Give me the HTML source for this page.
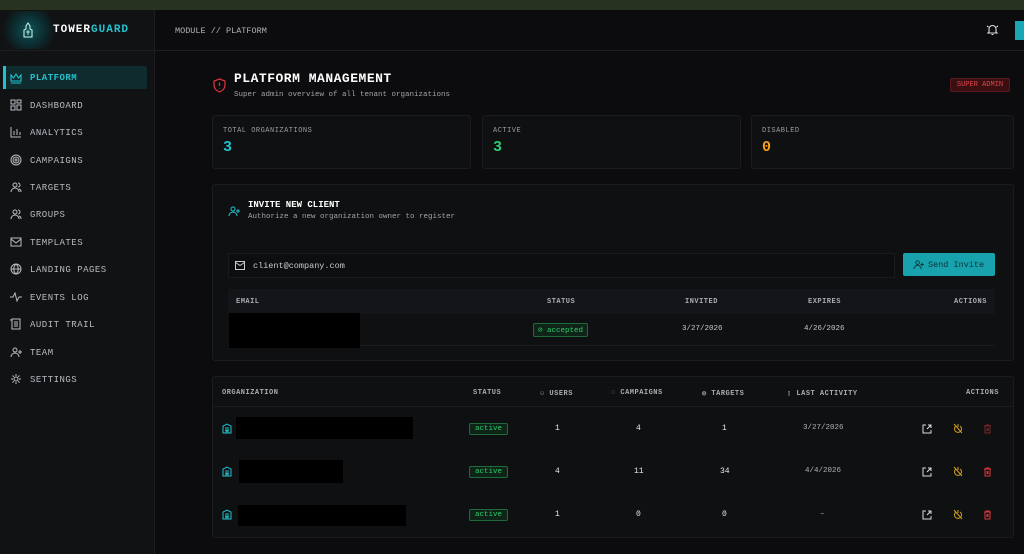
<!DOCTYPE html>
<html><head><meta charset="utf-8"><style>
*{margin:0;padding:0;box-sizing:border-box}
body{width:1024px;height:554px;overflow:hidden;background:#0c0c0e;font-family:"Liberation Mono","DejaVu Sans Mono",monospace;color:#d8d8d8;position:relative}
.a{position:absolute}
.nav{position:absolute;left:30px;font-size:9px;letter-spacing:.5px;color:#b8bcc2}
.ni{position:absolute;left:10px;width:12px;height:12px}
.card{position:absolute;background:#0f1012;border:1px solid #1b1c1f;border-radius:3px}
.lbl{position:absolute;font-size:7px;letter-spacing:.5px;color:#9a9ea4}
.th{position:absolute;font-size:7px;font-weight:bold;color:#a8acb2;letter-spacing:.5px}
.td{position:absolute;font-size:8px;color:#e8e8e8}
.badge{position:absolute;font-size:7.5px;color:#2ecc71;border:1px solid #1f6b3c;background:#0d2416;border-radius:2px;padding:1px 4px}
.blk{position:absolute;background:#000}
svg{display:block}
</style></head><body>
<div class="a" style="left:0;top:0;width:1024px;height:10px;background:#27331f"></div>
<div class="a" style="left:0;top:10px;width:155px;height:544px;background:#111214;border-right:1px solid #1d1e21"></div>
<div class="a" style="left:0;top:50px;width:1024px;height:1px;background:#1d1e21"></div>
<div class="a" style="left:2px;top:11px;width:54px;height:38px;background:radial-gradient(circle,#105357 0%,#0b2e31 45%,transparent 80%)"></div>
<svg class="a" style="left:22px;top:22px" width="12" height="18" viewBox="0 0 12 18"><path d="M6 1 L8 4 L8 7 L10 8 L10 15 L2 15 L2 8 L4 7 L4 4 Z" fill="none" stroke="#cfe" stroke-width="1"/><path d="M4 10h4M6 8v5" stroke="#cfe" stroke-width=".8"/></svg>
<div class="a" style="left:53px;top:24px;font-size:11px;font-weight:bold;letter-spacing:1px;color:#fff">TOWER<span style="color:#22c3cf">GUARD</span></div>
<div class="a" style="left:175px;top:26px;font-size:8.5px;color:#b0b4ba">MODULE // PLATFORM</div>
<svg class="a" style="left:986px;top:23px" width="13" height="13" viewBox="0 0 13 13" fill="none" stroke="#ddd" stroke-width="1.1"><path d="M3 9V6a3.5 3.5 0 017 0v3l1 1H2z M5.5 11.5h2 M1 3l1.5 1 M12 3l-1.5 1"/></svg>
<div class="a" style="left:1015px;top:21px;width:12px;height:19px;background:#19a7b4"></div>

<div class="a" style="left:3px;top:66px;width:144px;height:23px;background:#0f2b2e;border-radius:2px"></div>
<div class="a" style="left:3px;top:66px;width:3px;height:23px;background:#22c3cf"></div>
<svg class="ni" style="top:72px" viewBox="0 0 12 12" fill="none" stroke="#22c3cf" stroke-width="1.1"><path d="M1 3l2.5 3L6 2l2.5 4L11 3v6H1z M1 11h10"/></svg>
<div class="nav" style="top:73px;color:#22c3cf;font-weight:bold">PLATFORM</div>
<div class="nav" style="top:101px">DASHBOARD</div>
<div class="nav" style="top:128px">ANALYTICS</div>
<div class="nav" style="top:156px">CAMPAIGNS</div>
<div class="nav" style="top:183px">TARGETS</div>
<div class="nav" style="top:210px">GROUPS</div>
<div class="nav" style="top:238px">TEMPLATES</div>
<div class="nav" style="top:265px">LANDING PAGES</div>
<div class="nav" style="top:293px">EVENTS LOG</div>
<div class="nav" style="top:320px">AUDIT TRAIL</div>
<div class="nav" style="top:348px">TEAM</div>
<div class="nav" style="top:375px">SETTINGS</div>
<svg class="ni" style="top:99px" viewBox="0 0 12 12" fill="none" stroke="#b8bcc2"><rect x="1" y="1" width="4" height="4"/><rect x="7" y="1" width="4" height="3"/><rect x="1" y="7" width="4" height="4"/><rect x="7" y="6" width="4" height="5"/></svg>
<svg class="ni" style="top:126px" viewBox="0 0 12 12" fill="none" stroke="#b8bcc2"><path d="M1 1v10h10M4 9V5M7 9V3M10 9V6"/></svg>
<svg class="ni" style="top:154px" viewBox="0 0 12 12" fill="none" stroke="#b8bcc2"><circle cx="6" cy="6" r="5"/><circle cx="6" cy="6" r="3"/><circle cx="6" cy="6" r="1"/></svg>
<svg class="ni" style="top:181px" viewBox="0 0 12 12" fill="none" stroke="#b8bcc2"><circle cx="5" cy="4" r="2"/><path d="M1 11a4 4 0 018 0M8 2a2 2 0 010 4M11 11a3 3 0 00-2-3"/></svg>
<svg class="ni" style="top:208px" viewBox="0 0 12 12" fill="none" stroke="#b8bcc2"><circle cx="5" cy="4" r="2"/><path d="M1 11a4 4 0 018 0M8 2a2 2 0 010 4M11 11a3 3 0 00-2-3"/></svg>
<svg class="ni" style="top:236px" viewBox="0 0 12 12" fill="none" stroke="#b8bcc2"><rect x="1" y="2" width="10" height="8"/><path d="M1 3l5 4 5-4"/></svg>
<svg class="ni" style="top:263px" viewBox="0 0 12 12" fill="none" stroke="#b8bcc2"><circle cx="6" cy="6" r="5"/><path d="M1 6h10M6 1c-3 3-3 7 0 10M6 1c3 3 3 7 0 10"/></svg>
<svg class="ni" style="top:291px" viewBox="0 0 12 12" fill="none" stroke="#b8bcc2"><path d="M0 6h3l2-4 2 8 2-4h3"/></svg>
<svg class="ni" style="top:318px" viewBox="0 0 12 12" fill="none" stroke="#b8bcc2"><path d="M2 1h8v10H2zM4 4h4M4 6h4M4 8h4M0 2h2"/></svg>
<svg class="ni" style="top:346px" viewBox="0 0 12 12" fill="none" stroke="#b8bcc2"><circle cx="5" cy="4" r="2"/><path d="M1 11a4 4 0 018 0M10 4v4M8 6h4"/></svg>
<svg class="ni" style="top:373px" viewBox="0 0 12 12" fill="none" stroke="#b8bcc2"><circle cx="6" cy="6" r="2"/><path d="M6 1v2M6 9v2M1 6h2M9 6h2M2.5 2.5l1.4 1.4M8.1 8.1l1.4 1.4M2.5 9.5l1.4-1.4M8.1 3.9l1.4-1.4"/></svg>

<svg class="a" style="left:213px;top:78px" width="13" height="15" viewBox="0 0 13 15" fill="none" stroke="#e0363c" stroke-width="1.2"><path d="M6.5 1L12 3v4c0 4-3 6-5.5 7C4 13 1 11 1 7V3z M6.5 4.5v3.5 M6.5 10v.5"/></svg>
<div class="a" style="left:234px;top:71px;font-size:13px;font-weight:bold;color:#fff;letter-spacing:.5px">PLATFORM MANAGEMENT</div>
<div class="a" style="left:234px;top:91px;font-size:7.5px;color:#a0a4aa">Super admin overview of all tenant organizations</div>
<div class="a" style="left:950px;top:78px;width:60px;height:14px;background:#3a0f12;border:1px solid #5a1a1e;border-radius:2px;font-size:7px;color:#e0474d;text-align:center;line-height:12px">SUPER ADMIN</div>

<div class="card" style="left:212px;top:115px;width:259px;height:54px"></div>
<div class="card" style="left:482px;top:115px;width:259px;height:54px"></div>
<div class="card" style="left:751px;top:115px;width:263px;height:54px"></div>
<div class="lbl" style="left:223px;top:127px">TOTAL ORGANIZATIONS</div>
<div class="lbl" style="left:493px;top:127px">ACTIVE</div>
<div class="lbl" style="left:762px;top:127px">DISABLED</div>
<div class="a" style="left:223px;top:139px;font-size:15px;font-weight:bold;color:#22c3cf">3</div>
<div class="a" style="left:493px;top:139px;font-size:15px;font-weight:bold;color:#2ecc71">3</div>
<div class="a" style="left:762px;top:139px;font-size:15px;font-weight:bold;color:#f0a020">0</div>

<div class="card" style="left:212px;top:184px;width:802px;height:177px"></div>
<svg class="a" style="left:228px;top:205px" width="12" height="12" viewBox="0 0 12 12" fill="none" stroke="#22c3cf"><circle cx="5" cy="4" r="2"/><path d="M1 11a4 4 0 018 0M10 4v4M8 6h4"/></svg>
<div class="a" style="left:248px;top:200px;font-size:9px;font-weight:bold;color:#fff">INVITE NEW CLIENT</div>
<div class="a" style="left:248px;top:213px;font-size:7.5px;color:#a0a4aa">Authorize a new organization owner to register</div>
<div class="a" style="left:228px;top:253px;width:667px;height:25px;background:#0d0e10;border:1px solid #1a1b1e"></div>
<svg class="a" style="left:235px;top:261px" width="10" height="9" viewBox="0 0 10 9" fill="none" stroke="#ccc"><rect x=".5" y=".5" width="9" height="8"/><path d="M.5 1.5l4.5 3 4.5-3"/></svg>
<div class="a" style="left:253px;top:261px;font-size:8.5px;color:#c8ccd2">client@company.com</div>
<div class="a" style="left:903px;top:253px;width:92px;height:23px;background:#17a2ad;border-radius:2px"></div>
<svg class="a" style="left:913px;top:259px" width="11" height="11" viewBox="0 0 12 12" fill="none" stroke="#0c3a3e"><circle cx="5" cy="4" r="2"/><path d="M1 11a4 4 0 018 0M10 4v4M8 6h4"/></svg>
<div class="a" style="left:928px;top:260px;font-size:8.5px;color:#0d3437">Send Invite</div>
<div class="a" style="left:228px;top:289px;width:767px;height:25px;background:#141518"></div>
<div class="th" style="left:236px;top:298px">EMAIL</div>
<div class="th" style="left:547px;top:298px">STATUS</div>
<div class="th" style="left:685px;top:298px">INVITED</div>
<div class="th" style="left:808px;top:298px">EXPIRES</div>
<div class="th" style="left:954px;top:298px">ACTIONS</div>
<div class="a" style="left:228px;top:345px;width:767px;height:1px;background:#1a1b1e"></div>
<div class="blk" style="left:229px;top:313px;width:131px;height:35px"></div>
<div class="badge" style="left:533px;top:323px">⊘ accepted</div>
<div class="td" style="left:682px;top:325px;font-size:7.5px;color:#c8ccd2">3/27/2026</div>
<div class="td" style="left:804px;top:325px;font-size:7.5px;color:#c8ccd2">4/26/2026</div>

<div class="card" style="left:212px;top:376px;width:802px;height:162px"></div>
<div class="a" style="left:213px;top:406px;width:800px;height:1px;background:#1a1b1e"></div>
<div class="th" style="left:222px;top:389px">ORGANIZATION</div>
<div class="th" style="left:473px;top:389px">STATUS</div>
<div class="th" style="left:540px;top:389px">⚇ USERS</div>
<div class="th" style="left:611px;top:389px">◌ CAMPAIGNS</div>
<div class="th" style="left:702px;top:389px">◍ TARGETS</div>
<div class="th" style="left:787px;top:389px">▯ LAST ACTIVITY</div>
<div class="th" style="left:966px;top:389px">ACTIONS</div>

<div class="blk" style="left:236px;top:417px;width:177px;height:22px"></div>
<div class="blk" style="left:239px;top:460px;width:104px;height:23px"></div>
<div class="blk" style="left:238px;top:505px;width:168px;height:21px"></div>

<div id="rows"></div>
<script>
var ys=[429,472,515],d=[["1","4","1","3/27/2026"],["4","11","34","4/4/2026"],["1","0","0","–"]],h="";
for(var i=0;i<3;i++){var y=ys[i];
h+='<svg class="a" style="left:222px;top:'+(y-6)+'px" width="10" height="11" viewBox="0 0 10 11" fill="none" stroke="#22c3cf"><path d="M1 10V3l4-2 4 2v7zM3 5h4M3 7h4M4 10V8h2v2"/></svg>';
h+='<div class="badge" style="left:469px;top:'+(y-6)+'px;padding:1px 5px">active</div>';
h+='<div class="td" style="left:555px;top:'+(y-5)+'px">'+d[i][0]+'</div>';
h+='<div class="td" style="left:'+(d[i][1].length>1?634:636)+'px;top:'+(y-5)+'px">'+d[i][1]+'</div>';
h+='<div class="td" style="left:'+(d[i][2].length>1?720:722)+'px;top:'+(y-5)+'px">'+d[i][2]+'</div>';
h+='<div class="td" style="left:'+(d[i][3].length>4?(d[i][3].length>8?803:805):820)+'px;top:'+(y-5)+'px;font-size:7.5px;color:#b0b4ba">'+d[i][3]+'</div>';
h+='<svg class="a" style="left:922px;top:'+(y-5)+'px" width="10" height="10" viewBox="0 0 10 10" fill="none" stroke="#ddd"><path d="M4 1H1v8h8V6M6 1h3v3M9 1L5 5"/></svg>';
h+='<svg class="a" style="left:953px;top:'+(y-6)+'px" width="10" height="11" viewBox="0 0 10 11" fill="none" stroke="#d4a020"><path d="M3 3a3.5 3.5 0 104 0M1 1l8 9M5 1v3"/></svg>';
h+='<svg class="a" style="left:983px;top:'+(y-5)+'px" width="9" height="10" viewBox="0 0 9 10" fill="none" stroke="'+(i==0?'#7a2528':'#d9363c')+'"><path d="M1 2h7M3 2V1h3v1M2 2v7h5V2M4 4v3M5 4v3"/></svg>';
}
document.getElementById('rows').innerHTML=h;
</script>
</body></html>
